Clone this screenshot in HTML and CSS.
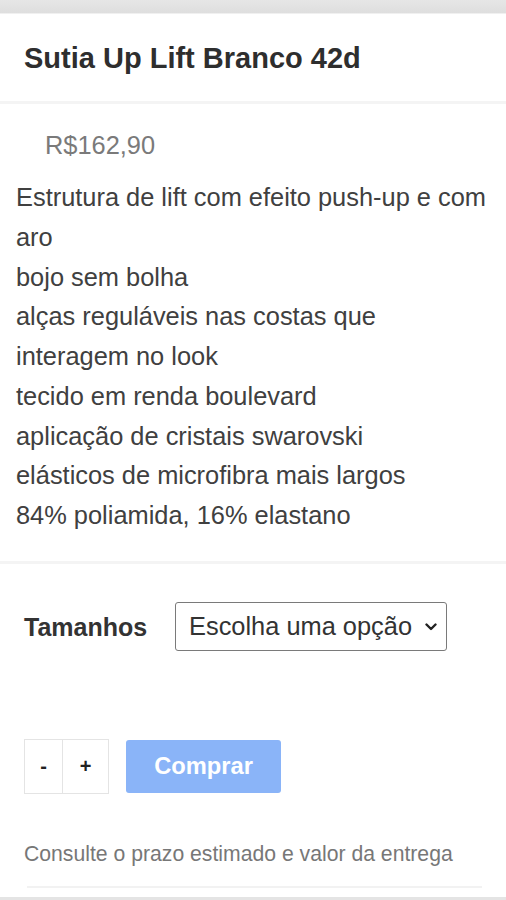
FILE: index.html
```html
<!DOCTYPE html>
<html lang="pt-BR">
<head>
<meta charset="utf-8">
<title>Sutia Up Lift Branco 42d</title>
<link rel="stylesheet" href="styles.css">
</head>
<body>
<div class="topbar"></div>
<main class="product">
  <header class="title-block">
    <h1 class="title">Sutia Up Lift Branco 42d</h1>
  </header>
  <section class="info">
    <p class="price">R$162,90</p>
    <p class="desc">Estrutura de lift com efeito push-up e com aro<br>bojo sem bolha<br>alças reguláveis nas costas que interagem no look<br>tecido em renda boulevard<br>aplicação de cristais swarovski<br>elásticos de microfibra mais largos<br>84% poliamida, 16% elastano</p>
  </section>
  <section class="variations">
    <label class="var-label" for="tam">Tamanhos</label>
    <div class="select-wrap">
      <select id="tam" class="select">
        <option>Escolha uma opção</option>
      </select>
      <svg class="chev" width="12" height="8" viewBox="0 0 12 8"><path d="M1.5 1.5 L6 6 L10.5 1.5" fill="none" stroke="#222" stroke-width="2.4" stroke-linecap="round" stroke-linejoin="round"/></svg>
    </div>
  </section>
  <section class="buy">
    <div class="qty">
      <button class="qbtn minus">-</button>
      <button class="qbtn plus">+</button>
    </div>
    <button class="comprar">Comprar</button>
  </section>
  <p class="frete">Consulte o prazo estimado e valor da entrega</p>
  <div class="rule"></div>
</main>
<div class="bottombar"></div>
</body>
</html>
```
FILE: styles.css
```css
* { box-sizing: border-box; }
html, body { margin: 0; padding: 0; background: #fff; }
body {
  font-family: "Liberation Sans", Arial, sans-serif;
  width: 506px;
  height: 900px;
  overflow: hidden;
  display: flex;
  flex-direction: column;
}
.topbar {
  height: 14px;
  background: linear-gradient(#e6e6e6, #dedede);
  border-bottom: 1px solid #f0f0f0;
  flex: none;
}
.product { flex: 1; display: flex; flex-direction: column; }
.title-block {
  padding: 26px 24px 24px;
  border-bottom: 3px solid #f4f4f4;
}
.title {
  margin: 0;
  font-size: 29px;
  line-height: 37px;
  font-weight: bold;
  color: #2e2e2e;
}
.info { padding: 26px 16px 0; border-bottom: 3px solid #f4f4f4; padding-bottom: 25px; }
.price {
  margin: 0 0 18px 29px;
  font-size: 25.4px;
  line-height: 30px;
  color: #7a7a7a;
}
.desc {
  margin: 0;
  font-size: 25.4px;
  line-height: 39.75px;
  color: #404040;
}
.variations {
  display: flex;
  align-items: center;
  padding: 38px 24px 0;
}
.var-label {
  width: 151px;
  font-size: 25px;
  font-weight: bold;
  color: #333;
  padding-top: 2px;
}
.select-wrap { position: relative; width: 272px; height: 49px; }
.select {
  appearance: none;
  -webkit-appearance: none;
  width: 100%;
  height: 100%;
  border: 1px solid #7a7a7a;
  border-radius: 3px;
  background: #fff;
  font-family: "Liberation Sans", Arial, sans-serif;
  font-size: 25.4px;
  color: #333;
  padding: 0 0 0 13px;
}
.chev { position: absolute; right: 10px; top: 21px; }
.buy {
  display: flex;
  align-items: center;
  padding: 88px 24px 0;
  gap: 17px;
}
.qty { display: flex; }
.qbtn {
  height: 55px;
  background: #fff;
  border: 1px solid #e4e4e4;
  font-family: "Liberation Sans", Arial, sans-serif;
  font-size: 20px;
  font-weight: bold;
  color: #222;
  padding: 0;
}
.minus { width: 39px; }
.plus { width: 46px; border-left: none; }
.comprar {
  width: 155px;
  height: 53px;
  border: none;
  border-radius: 3px;
  background: #8ab4f8;
  color: #fff;
  font-family: "Liberation Sans", Arial, sans-serif;
  font-size: 23.7px;
  font-weight: bold;
  padding: 0;
}
.frete {
  margin: 47px 24px 0;
  font-size: 21.2px;
  line-height: 26px;
  color: #777;
}
.rule {
  margin: 19px 24px 0 27px;
  height: 2px;
  background: #f2f2f2;
}
.bottombar {
  height: 3px;
  background: #e4e4e4;
  flex: none;
}
```
